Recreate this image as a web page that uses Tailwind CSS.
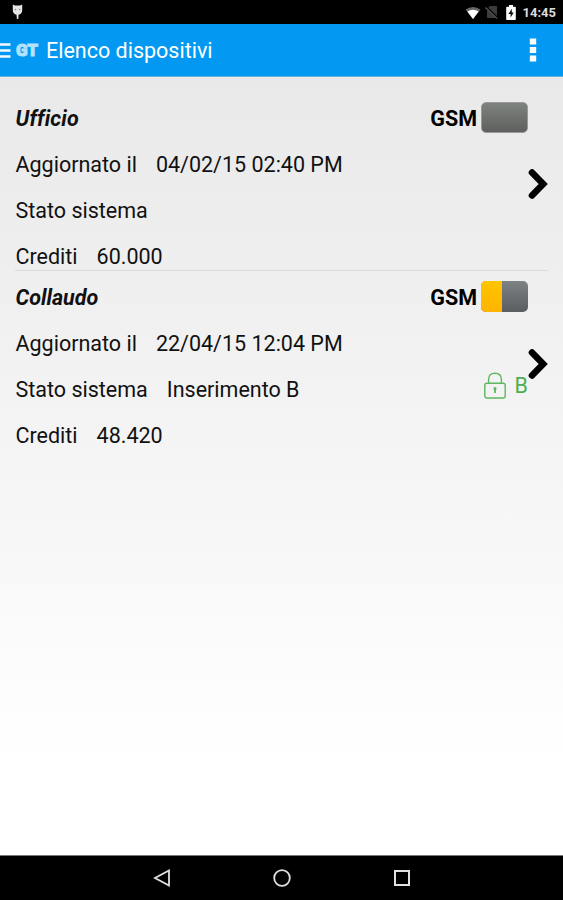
<!DOCTYPE html>
<html lang="it">
<head>
    <meta charset="UTF-8">
    <meta name="viewport" content="width=device-width, initial-scale=1.0">
    <title>Elenco dispositivi</title>
    <script src="https://cdn.jsdelivr.net/npm/@tailwindcss/browser@4"></script>
</head>
<body class="bg-black">
    <div class="h-[900px] w-[563px] flex flex-col overflow-hidden font-['Roboto',sans-serif] text-[21.5px] text-[#111]">

        <!-- Status bar -->
        <div class="h-6 shrink-0 bg-black flex items-center justify-between pl-3 pr-[7px]">
            <svg class="w-[11px] h-4" viewBox="0 0 11 16">
                <path d="M0.8 0.5 L3 1.6 H8 L10.2 0.5 V6.5 Q10 10 6.6 10.8 L6.3 15 H4.9 L4.5 10.8 Q1 10 0.8 6.5 Z" fill="#e4e4e4"/>
                <circle cx="3.4" cy="5.5" r="0.8" fill="#888"/>
                <circle cx="7.6" cy="5.5" r="0.8" fill="#888"/>
            </svg>
            <div class="flex items-center">
                <svg class="w-4 h-3 mt-[2px]" viewBox="0 0 16 12">
                    <path d="M0.5 2.5 Q8 -2.5 15.5 2.5 L8 12 Z" fill="#666"/>
                    <path d="M2.4 4.5 Q8 1 13.6 4.5 L8 12 Z" fill="#fff"/>
                </svg>
                <svg class="w-[14px] h-[14px] ml-[4px]" viewBox="0 0 14 14">
                    <path d="M5 1 H12 V13 H2 V4 Z" fill="#3c3c3c"/>
                    <path d="M0.5 1.5 L13 13.5" stroke="#000" stroke-width="2.4"/>
                    <path d="M0.5 2.5 L12 13.5" stroke="#555" stroke-width="1.2"/>
                </svg>
                <svg class="w-[10px] h-[15px] ml-[7px]" viewBox="0 0 10 15">
                    <path d="M3 0 H7 V1.8 H9 Q9.8 1.8 9.8 2.6 V14.2 Q9.8 15 9 15 H1 Q0.2 15 0.2 14.2 V2.6 Q0.2 1.8 1 1.8 H3 Z" fill="#fff"/>
                    <path d="M5.8 3.8 L2.4 9 H4.6 V12.6 L7.8 7.4 H5.8 Z" fill="#111"/>
                </svg>
                <span class="ml-[7px] mt-[2px] text-[13px] leading-4 font-bold text-[#ddd]">14:45</span>
            </div>
        </div>

        <!-- Action bar -->
        <div class="h-[53px] shrink-0 bg-[#0399f2] border-b border-[#6aadd8] flex items-center text-white">
            <svg class="w-[11px] h-[15px] mt-px" viewBox="0 0 11 15">
                <path d="M0 1.5 H10.5 M0 7.5 H10.5 M0 13.5 H10.5" stroke="#f2faff" stroke-width="2.4"/>
            </svg>
            <span class="ml-[5px] w-[24px] text-[17px] leading-6 font-black tracking-[-0.3px] text-[#b5e2fc] [-webkit-text-stroke:1px_#b5e2fc]">GT</span>
            <span class="ml-[6px] mt-[3px] whitespace-nowrap">Elenco dispositivi</span>
            <svg class="w-2 h-6 ml-auto mr-[26px]" viewBox="0 0 8 24">
                <path d="M0.8 0.5 H7.2 V6.5 H0.8 Z M0.8 9 H7.2 V15 H0.8 Z M0.8 17.5 H7.2 V23.5 H0.8 Z" fill="#fff"/>
            </svg>
        </div>

        <!-- Device list -->
        <main class="flex-1 bg-linear-to-b from-[#e9e9e9] from-0% via-[#f5f5f5] via-50% to-white to-88% px-[15px] pt-[14px]">
            <div class="flex pt-[15px] border-b border-[#dcdcdc]">
                <div class="flex-1 flex flex-col gap-5 pl-[0.5px] leading-[26px] whitespace-nowrap">
                    <div class="font-bold italic tracking-[0.15px]">Ufficio</div>
                    <div class="flex gap-[19px]"><span>Aggiornato il</span><span>04/02/15 02:40 PM</span></div>
                    <div>Stato sistema</div>
                    <div class="flex gap-[19px]"><span>Crediti</span><span>60.000</span></div>
                </div>
                <div class="leading-[26px]">
                    <div class="flex items-center gap-1 -mt-[4px]">
                        <span class="pt-[2px] font-bold text-black">GSM</span>
                        <div class="w-[47px] h-[31px] rounded-[5px] border border-[#999] bg-linear-to-b from-[#7f8380] to-[#5d605d]"></div>
                    </div>
                </div>
                <svg class="w-5 h-[30px] self-center -mt-[9px]" viewBox="0 0 20 30">
                    <path d="M4 3.5 L15.2 15 L4 26.5" fill="none" stroke="#000" stroke-width="6.6" stroke-linecap="round"/>
                </svg>
            </div>

            <div class="flex pt-[14px]">
                <div class="flex-1 flex flex-col gap-5 pl-[0.5px] leading-[26px] whitespace-nowrap">
                    <div class="font-bold italic">Collaudo</div>
                    <div class="flex gap-[19px]"><span>Aggiornato il</span><span>22/04/15 12:04 PM</span></div>
                    <div class="flex gap-[19px]"><span>Stato sistema</span><span>Inserimento B</span></div>
                    <div class="flex gap-[19px]"><span>Crediti</span><span>48.420</span></div>
                </div>
                <div class="leading-[26px]">
                    <div class="flex items-center gap-1 -mt-[4px]">
                        <span class="pt-[2px] font-bold text-black">GSM</span>
                        <div class="w-[47px] h-[31px] rounded-[5px] bg-linear-to-b from-[#7f8284] to-[#5b5e60] overflow-hidden">
                            <div class="w-[21px] h-full bg-linear-to-b from-[#ffc400] to-[#ffb400]"></div>
                        </div>
                    </div>
                    <div class="flex items-center justify-end gap-[9px] mt-[60px] text-[#4caf50]">
                        <svg class="w-[22px] h-[27px]" viewBox="0 0 22 27" fill="none" stroke="#5db85f" stroke-width="1.4">
                            <rect x="0.8" y="11.2" width="20.4" height="14.8" rx="2"/>
                            <path d="M4.6 11 V7.5 Q4.6 1.2 11 1.2 Q17.4 1.2 17.4 7.5 V11"/>
                            <path d="M11 16 V21" stroke-width="1.8"/>
                            <circle cx="11" cy="16.6" r="0.9" fill="#5db85f"/>
                        </svg>
                        <span>B</span>
                    </div>
                </div>
                <svg class="w-5 h-[30px] self-center -mt-[7px]" viewBox="0 0 20 30">
                    <path d="M4 3.5 L15.2 15 L4 26.5" fill="none" stroke="#000" stroke-width="6.6" stroke-linecap="round"/>
                </svg>
            </div>
        </main>

        <!-- Navigation bar -->
        <div class="h-[45px] shrink-0 bg-black border-t border-[#777] flex items-center justify-center gap-[102px]">
            <svg class="w-[18px] h-[18px]" viewBox="0 0 18 18">
                <path d="M16 1.5 V16.5 L2 9 Z" fill="none" stroke="#e0e0e0" stroke-width="1.8"/>
            </svg>
            <svg class="w-[18px] h-[18px]" viewBox="0 0 18 18">
                <circle cx="9" cy="9" r="7.8" fill="none" stroke="#e0e0e0" stroke-width="1.8"/>
            </svg>
            <svg class="w-[18px] h-[18px]" viewBox="0 0 18 18">
                <rect x="2" y="2" width="14" height="14" fill="none" stroke="#e0e0e0" stroke-width="2"/>
            </svg>
        </div>
    </div>
</body>
</html>
